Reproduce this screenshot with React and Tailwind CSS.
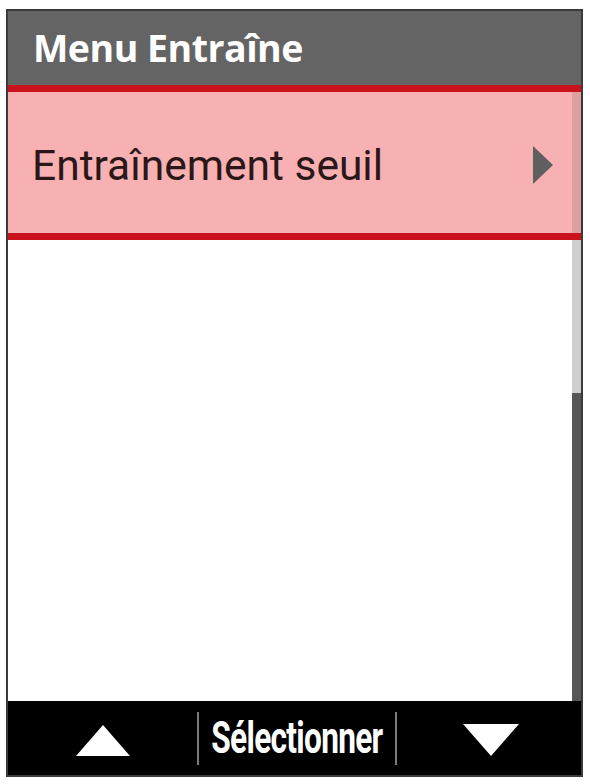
export default function App() {
  return (
    <div className="w-full h-[784px] bg-white pt-[9px] pl-[6px]">
      <div className="w-[577px] h-[768px] border-2 border-[#3b3b3b] flex flex-col overflow-hidden">
        {/* title bar */}
        <div className="h-[74px] bg-[#646464] flex items-center pl-[25px] shrink-0">
          <span className="text-white font-bold text-[37.5px] leading-none font-['Open_Sans',sans-serif] tracking-[-0.5px]">
            Menu Entraîne
          </span>
        </div>

        {/* list */}
        <div className="relative flex-1 flex flex-col">
          <div className="h-[7px] bg-[#c9121c]" />
          <div className="h-[141px] bg-[#f8b1b3] flex items-center justify-between pl-[24px] pr-[27px]">
            <span className="text-[#2a1718] text-[42.5px] leading-none font-['Roboto',sans-serif] pt-[8px]">
              Entraînement seuil
            </span>
            <svg width="22" height="40" viewBox="0 0 22 40" className="mt-[4px]">
              <path d="M1 1 L21 20 L1 39 Z" fill="#5f5f5f" />
            </svg>
          </div>
          <div className="h-[7px] bg-[#c9121c]" />
          <div className="flex-1 bg-white" />

          {/* scrollbar */}
          <div className="absolute right-0 top-[7px] bottom-0 w-[9px] flex flex-col">
            <div className="h-[141px] bg-black/10" />
            <div className="h-[7px]" />
            <div className="h-[153px] bg-[#cfcfcf]" />
            <div className="flex-1 bg-[#565656]" />
          </div>
        </div>

        {/* soft keys */}
        <div className="h-[74px] bg-black flex items-center shrink-0">
          <div className="w-[189px] flex justify-center pt-[4px]">
            <svg width="54" height="31" viewBox="0 0 54 31">
              <path d="M27 0 L54 31 L0 31 Z" fill="#fff" />
            </svg>
          </div>
          <div className="w-[2px] h-[53px] bg-[#7a7a7a]" />
          <div className="w-[196px] flex justify-center">
            <span className="text-white font-bold text-[44px] leading-none font-['Roboto',sans-serif] scale-x-[0.72] tracking-[-1px]">
              Sélectionner
            </span>
          </div>
          <div className="w-[2px] h-[53px] bg-[#7a7a7a]" />
          <div className="flex-1 flex justify-center pt-[4px] pl-[4px]">
            <svg width="56" height="32" viewBox="0 0 56 32">
              <path d="M0 0 L56 0 L28 32 Z" fill="#fff" />
            </svg>
          </div>
        </div>
      </div>
    </div>
  );
}
